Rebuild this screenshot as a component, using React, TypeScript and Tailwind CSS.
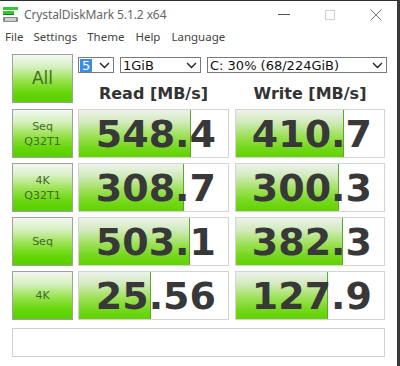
import React from "react";

const Chevron = () => (
  <svg width="11" height="7" viewBox="0 0 11 7" className="shrink-0">
    <path d="M1 1 L5.5 5.5 L10 1" fill="none" stroke="#222" strokeWidth="1.4" />
  </svg>
);

const rows = [
  { l1: "Seq", l2: "Q32T1", r: "548.4", rw: 112, w: "410.7", ww: 108 },
  { l1: "4K", l2: "Q32T1", r: "308.7", rw: 105, w: "300.3", ww: 103 },
  { l1: "Seq", l2: "", r: "503.1", rw: 111, w: "382.3", ww: 107 },
  { l1: "4K", l2: "", r: "25.56", rw: 72, w: "127.9", ww: 92 },
];

const btnBg =
  "bg-[linear-gradient(to_bottom,#f4f9f1_0%,#d6f0c0_25%,#96e24a_55%,#66d60a_80%,#58d000_100%)]";
const fillBg =
  "bg-[linear-gradient(to_bottom,#eef2ec_0%,#d2ebbd_25%,#9ee158_55%,#74d81c_80%,#62d200_100%)]";

function ValueBox({ value, fill }: { value: string; fill: number }) {
  return (
    <div className="relative h-full border border-[#d4d4d4] bg-white overflow-hidden">
      <div
        className={`absolute left-0 top-0 bottom-0 ${fillBg} border-r border-[#5aa830]`}
        style={{ width: fill }}
      />
      <div
        className="relative h-full flex items-center justify-end pr-[12px] text-[38px] font-bold text-[#383838] leading-none"
        style={{ fontFamily: '"DejaVu Sans", Verdana, sans-serif' }}
      >
        {value}
      </div>
    </div>
  );
}

function Select({ w, text, highlight }: { w: number; text: string; highlight?: boolean }) {
  return (
    <div
      className="h-[16px] border border-[#7a7a7a] bg-white flex items-center justify-between pl-[1px] pr-[3px]"
      style={{ width: w }}
    >
      {highlight ? (
        <span className="bg-[#3a8ee6] text-white text-[13px] leading-[13px] px-[2px] h-[13px]">{text}</span>
      ) : (
        <span className="text-[13px] leading-none text-[#111] pl-[1px]">{text}</span>
      )}
      <Chevron />
    </div>
  );
}

export default function App() {
  return (
    <div
      className="w-[400px] h-[366px] bg-white border-t border-[#2e2e2e] border-r-[3px] border-r-[#3a3a3a] overflow-hidden flex flex-col"
      style={{ fontFamily: '"DejaVu Sans", Verdana, sans-serif' }}
    >
      {/* Title bar */}
      <div className="h-[27px] flex items-center shrink-0">
        <svg width="17" height="17" viewBox="0 0 17 17" className="ml-[2px] mt-[-1px]">
          <rect x="1" y="1" width="15" height="3" fill="#2fc82f" />
          <rect x="1" y="5" width="11" height="3" fill="#2fc82f" />
          <rect x="1" y="8" width="11" height="1" fill="#1a7a1a" />
          <rect x="1" y="11" width="15" height="5" rx="1" fill="#8a8a8a" />
          <rect x="3" y="12" width="11" height="3" fill="#cfcfcf" />
        </svg>
        <span
          className="ml-[5px] text-[12px] text-[#666] tracking-[-0.1px]"
          style={{ fontFamily: '"Noto Sans", "Open Sans", sans-serif' }}
        >
          CrystalDiskMark 5.1.2 x64
        </span>
        <div className="flex-1" />
        <div className="w-[12px] h-[1px] bg-[#555] mr-[35px]" />
        <div className="w-[10px] h-[10px] border border-[#d0d0d0] mr-[35px]" />
        <svg width="12" height="12" viewBox="0 0 12 12" className="mr-[15px]">
          <path d="M0.5 0.5 L11.5 11.5 M11.5 0.5 L0.5 11.5" stroke="#777" strokeWidth="1" />
        </svg>
      </div>

      {/* Menu */}
      <div
        className="h-[18px] flex items-center text-[11.5px] text-[#444] shrink-0"
        style={{ fontFamily: '"Noto Sans", "Open Sans", sans-serif' }}
      >
        <span className="ml-[5px]">File</span>
        <span className="ml-[10px]">Settings</span>
        <span className="ml-[10px]">Theme</span>
        <span className="ml-[11px]">Help</span>
        <span className="ml-[11px]">Language</span>
      </div>

      {/* Main */}
      <div className="pl-[12px] pt-[8px] flex flex-col">
        <div className="flex h-[49px]">
          <div
            className={`w-[61px] h-[49px] border border-[#a0a0a0] ${btnBg} flex items-center justify-center text-[17px] text-[#3f6e22]`}
          >
            All
          </div>
          <div className="ml-[5px] flex flex-col">
            <div className="flex items-center gap-[6px] mt-[3px]">
              <Select w={36} text="5" highlight />
              <Select w={81} text="1GiB" />
              <Select w={180} text="C: 30% (68/224GiB)" />
            </div>
            <div className="flex mt-[11px]">
              <div className="w-[151px] text-center text-[16px] font-bold text-[#333] leading-[20px]">
                Read [MB/s]
              </div>
              <div className="w-[150px] ml-[6px] text-center text-[16px] font-bold text-[#333] leading-[20px]">
                Write [MB/s]
              </div>
            </div>
          </div>
        </div>

        <div className="flex flex-col gap-[5px] mt-[6px]">
          {rows.map((r, i) => (
            <div key={i} className="flex h-[49px]">
              <div
                className={`w-[61px] h-full border border-[#a0a0a0] ${btnBg} flex flex-col items-center justify-center text-[11px] leading-[15px] text-[#426a26]`}
              >
                <span>{r.l1}</span>
                {r.l2 && <span>{r.l2}</span>}
              </div>
              <div className="w-[151px] ml-[5px] h-full">
                <ValueBox value={r.r} fill={r.rw} />
              </div>
              <div className="w-[150px] ml-[6px] h-full">
                <ValueBox value={r.w} fill={r.ww} />
              </div>
            </div>
          ))}
        </div>

        <div className="mt-[8px] w-[373px] h-[29px] border border-[#cfcfcf] bg-white" />
      </div>
    </div>
  );
}
